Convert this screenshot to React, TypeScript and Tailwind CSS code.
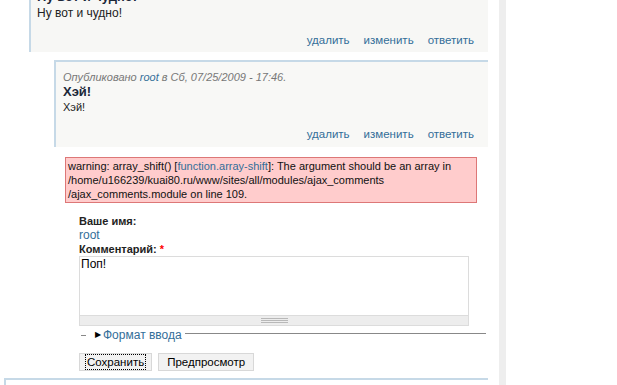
const sans = "font-['Liberation_Sans',Arial,sans-serif]";

function Links() {
  return (
    <div className="flex justify-end gap-[14px] text-[11.5px] leading-[14px] text-[#336e99]">
      <span>удалить</span>
      <span>изменить</span>
      <span>ответить</span>
    </div>
  );
}

export default function App() {
  return (
    <div className={`flex h-[385px] w-[617px] overflow-hidden bg-white text-[#222] ${sans}`}>
      <div className="w-[499px] shrink-0">
        {/* previous comment, scrolled off the top */}
        <div className="ml-[29px] -mt-[17px] h-[69px] w-[459px] border-l-2 border-[#c6d9e7] bg-[#f7f7f5] pl-[6px] pr-[14px]">
          <div className="pt-[6px] text-[13px] font-bold leading-[16px] text-[#1b2738]">Ну вот и чудно!</div>
          <div className="mt-[1px] text-[12px] leading-[14px]">Ну вот и чудно!</div>
          <div className="mt-[13px]">
            <Links />
          </div>
        </div>

        {/* reply */}
        <div className="ml-[54px] mt-[8px] h-[87px] w-[434px] border-l-2 border-t-2 border-[#c6d9e7] bg-[#f8f8f6] pl-[7px] pr-[14px]">
          <div className="mt-[8px] text-[11px] italic leading-[14px] text-[#777]">
            Опубликовано <span className="text-[#336e99]">root</span> в Сб, 07/25/2009 - 17:46.
          </div>
          <div className="text-[13px] font-bold leading-[16px] text-[#1b2738]">Хэй!</div>
          <div className="text-[11px] leading-[14px]">Хэй!</div>
          <div className="mt-[13px]">
            <Links />
          </div>
        </div>

        {/* warning */}
        <div className="ml-[65px] mt-[10px] w-[412px] border border-[#dd7777] bg-[#ffcccc] px-[2px] py-[1px] text-[11px] leading-[14px] text-[#111]">
          warning: array_shift() [<span className="text-[#336e99]">function.array-shift</span>]: The argument should be an array in
          /home/u166239/kuai80.ru/www/sites/all/modules/ajax_comments
          <br />
          /ajax_comments.module on line 109.
        </div>

        {/* form */}
        <div className="ml-[79px] mt-[11px] w-[407px]">
          <div className="text-[11px] font-bold leading-[14px]">Ваше имя:</div>
          <div className="text-[12px] leading-[14px] text-[#336e99]">root</div>
          <div className="text-[11px] font-bold leading-[14px]">
            Комментарий: <span className="text-[#f00]">*</span>
          </div>
          <div className="w-[390px] border border-[#dcdcdc]">
            <div className="h-[58px] px-[1px] text-[12px] leading-[14px] text-black">Поп!</div>
            <div className="flex h-[10px] flex-col items-center justify-center gap-[1px] border-t border-[#dcdcdc] bg-[#ededed]">
              <div className="h-px w-[27px] bg-[#b8b8b8]" />
              <div className="h-px w-[27px] bg-[#b8b8b8]" />
              <div className="h-px w-[27px] bg-[#b8b8b8]" />
            </div>
          </div>

          <div className="mt-[2px] flex items-center text-[12px] leading-[14px]">
            <div className="ml-[2px] h-px w-[5px] bg-[#888]" />
            <span className="ml-[9px] text-[8px] leading-[8px] text-black">▶</span>
            <span className="ml-[2px] text-[#336e99]">Формат ввода</span>
            <div className="ml-[3px] -mt-[3px] h-px flex-1 bg-[#888]" />
          </div>

          <div className="mt-[11px] flex gap-[3px] text-[11.5px] leading-[14px] text-black">
            <div className="flex h-[18px] items-center border border-[#d8d8d8] bg-[#f2f2f2] px-[6px]">
              <span className="outline-1 outline-dotted outline-black px-[1px]">Сохранить</span>
            </div>
            <div className="ml-[3px] flex h-[18px] items-center border border-[#d8d8d8] bg-[#f2f2f2] px-[8px]">
              Предпросмотр
            </div>
          </div>
        </div>

        {/* next comment */}
        <div className="ml-[4px] mt-[7px] h-[20px] w-[484px] border-l-2 border-t-2 border-[#c6d9e7]" />
      </div>
      <div className="h-full w-[7px] shrink-0 bg-[#eeeeee]" />
      <div className="flex-1" />
    </div>
  );
}
